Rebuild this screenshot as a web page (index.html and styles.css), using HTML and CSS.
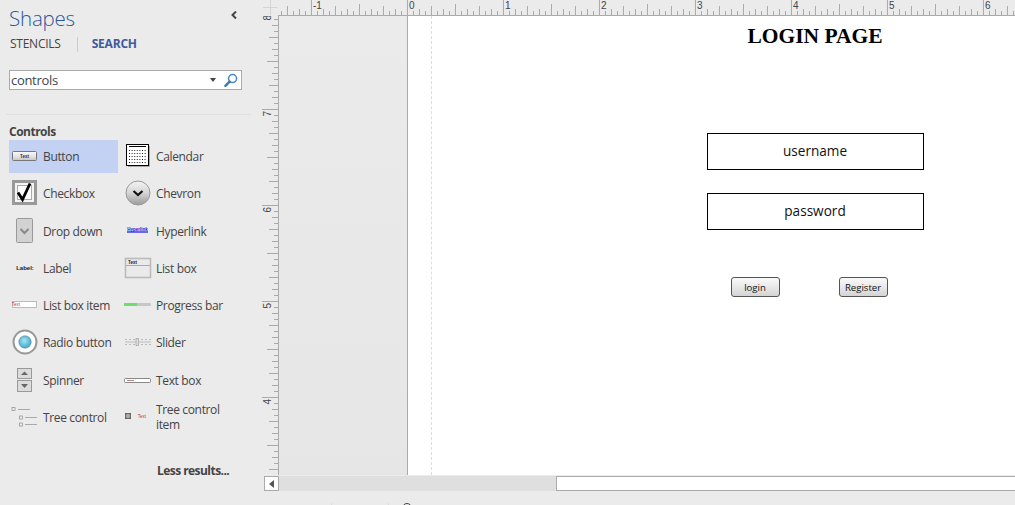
FILE: index.html
```html
<!DOCTYPE html>
<html lang="en">
<head>
<meta charset="utf-8">
<title>Shapes - Login page</title>
<link rel="stylesheet" href="styles.css">
</head>
<body>
<svg class="defs" width="0" height="0" aria-hidden="true">
  <defs>
    <linearGradient id="gBtn" x1="0" y1="0" x2="0" y2="1"><stop offset="0" stop-color="#fafafa"/><stop offset="0.5" stop-color="#e6e6e6"/><stop offset="1" stop-color="#c4c4c4"/></linearGradient>
    <linearGradient id="gChev" x1="0" y1="0" x2="0" y2="1"><stop offset="0" stop-color="#f4f4f4"/><stop offset="0.5" stop-color="#d4d4d4"/><stop offset="1" stop-color="#9a9a9a"/></linearGradient>
    <radialGradient id="gRadio" cx="0.45" cy="0.4" r="0.65"><stop offset="0" stop-color="#a5e4f4"/><stop offset="1" stop-color="#36a3c9"/></radialGradient>
    <pattern id="hTicks" width="96" height="16" patternUnits="userSpaceOnUse" patternTransform="translate(33 0)">
      <path class="tick" d="M.5 0V15M48.5 4V15M24.5 6V15M72.5 6V15M12.5 9V15M36.5 9V15M60.5 9V15M84.5 9V15M6.5 11V15M18.5 11V15M30.5 11V15M42.5 11V15M54.5 11V15M66.5 11V15M78.5 11V15M90.5 11V15"/>
    </pattern>
    <pattern id="vTicks" width="17" height="96" patternUnits="userSpaceOnUse" patternTransform="translate(0 -3)">
      <path class="tick" d="M0 .5H16M5 48.5H16M7 24.5H16M7 72.5H16M10 12.5H16M10 36.5H16M10 60.5H16M10 84.5H16M12 6.5H16M12 18.5H16M12 30.5H16M12 42.5H16M12 54.5H16M12 66.5H16M12 78.5H16M12 90.5H16"/>
    </pattern>
  </defs>
</svg>

<aside class="sidebar">
  <header class="panel-head">
    <h1 class="panel-title">Shapes</h1>
    <svg class="collapse" width="6" height="8" viewBox="0 0 6 8"><path d="M5 .5 1.5 4 5 7.5" fill="none" stroke="#444" stroke-width="2"/></svg>
  </header>
  <nav class="tabs">
    <span class="tab">STENCILS</span>
    <span class="tab-sep"></span>
    <span class="tab tab-active">SEARCH</span>
  </nav>
  <div class="search">
    <span class="search-text">controls</span>
    <svg class="search-arrow" width="6" height="4" viewBox="0 0 6 4"><path d="M0 0H6L3 4Z" fill="#444"/></svg>
    <svg class="search-icon" width="14" height="15" viewBox="0 0 14 15"><circle cx="8.6" cy="5.6" r="4" fill="#fff" stroke="#4a86c0" stroke-width="1.5"/><path d="M5.6 8.6 1.4 12.8" stroke="#3a78b4" stroke-width="2.4" stroke-linecap="round"/></svg>
  </div>
  <hr class="panel-rule">
  <h2 class="group-title">Controls</h2>
  <ul class="shape-grid">
    <li class="shape shape-selected">
      <svg class="shape-icon" viewBox="0 0 34 33"><rect x="3.5" y="11.5" width="24" height="9" rx="1" fill="url(#gBtn)" stroke="#777"/><text x="15.5" y="18" class="mini mini-dark">Text</text></svg>
      <span>Button</span>
    </li>
    <li class="shape">
      <svg class="shape-icon" viewBox="0 0 34 33"><rect x="4.5" y="4.5" width="22" height="22" fill="#f4f4f4" stroke="#999" stroke-width="3"/><rect x="8.5" y="8.5" width="14" height="14" fill="#fff" stroke="#aaa"/><path d="M9 15.5 13.5 22.5 21 6.5" fill="none" stroke="#000" stroke-width="2.8"/></svg>
      <span>Checkbox</span>
    </li>
    <li class="shape">
      <svg class="shape-icon" viewBox="0 0 34 33"><rect x="7.5" y="3.5" width="16" height="24" rx="1" fill="#d2d2d2" stroke="#999"/><path d="M11.5 14 15.5 18 19.5 14" fill="none" stroke="#888" stroke-width="2"/></svg>
      <span>Drop down</span>
    </li>
    <li class="shape">
      <svg class="shape-icon" viewBox="0 0 34 33"><text x="16" y="18" class="mini mini-label">Label:</text></svg>
      <span>Label</span>
    </li>
    <li class="shape">
      <svg class="shape-icon" viewBox="0 0 34 33"><rect x="3.5" y="12.5" width="24" height="6" fill="#fff" stroke="#bbb"/><text x="7" y="17" class="mini mini-red">Text</text></svg>
      <span>List box item</span>
    </li>
    <li class="shape">
      <svg class="shape-icon" viewBox="0 0 34 33"><circle cx="16" cy="16" r="11.5" fill="#fff" stroke="#999" stroke-width="2"/><circle cx="16" cy="16" r="6.2" fill="url(#gRadio)" stroke="#5a8a9c" stroke-width=".6"/></svg>
      <span>Radio button</span>
    </li>
    <li class="shape">
      <svg class="shape-icon" viewBox="0 0 34 33"><rect x="8.5" y="4.5" width="14" height="10" fill="#dcdcdc" stroke="#999"/><path d="M12 11 15.5 7.5 19 11Z" fill="#666"/><rect x="8.5" y="16.5" width="14" height="11" fill="#dcdcdc" stroke="#999"/><path d="M12 20 19 20 15.5 24Z" fill="#666"/></svg>
      <span>Spinner</span>
    </li>
    <li class="shape">
      <svg class="shape-icon" viewBox="0 0 34 33"><path d="M9 8.5H21M16 16.5H28M16 23.5H28" stroke="#aaa" fill="none"/><rect x="3" y="6.5" width="3" height="3" fill="#eee" stroke="#999" stroke-width=".8"/><rect x="10.5" y="15" width="3" height="3" fill="#eee" stroke="#999" stroke-width=".8"/><rect x="10.5" y="22" width="3" height="3" fill="#eee" stroke="#999" stroke-width=".8"/></svg>
      <span>Tree control</span>
    </li>
    <li class="shape">
      <svg class="shape-icon" viewBox="0 0 34 33"><rect x="4.5" y="4.5" width="22" height="21" fill="#fff" stroke="#000"/><path d="M27.5 6V26.5H6" fill="none" stroke="#aaa"/><path d="M7 6.5H24" stroke="#000"/><path d="M7 10.5H24M7 13.5H24M7 16.5H24M7 19.5H24M7 22.5H24" stroke="#222" stroke-dasharray="1 1.6"/></svg>
      <span>Calendar</span>
    </li>
    <li class="shape">
      <svg class="shape-icon" viewBox="0 0 34 33"><circle cx="16" cy="16" r="12" fill="url(#gChev)" stroke="#999"/><path d="M11.5 14 16 18 20.5 14" fill="none" stroke="#111" stroke-width="2.2"/></svg>
      <span>Chevron</span>
    </li>
    <li class="shape">
      <svg class="shape-icon" viewBox="0 0 34 33"><text x="15.5" y="16" class="mini mini-blue">Hyperlink</text><path d="M5 17H26" stroke="#1414d8" stroke-width="1.2"/></svg>
      <span>Hyperlink</span>
    </li>
    <li class="shape">
      <svg class="shape-icon" viewBox="0 0 34 33"><rect x="3.5" y="6.5" width="25" height="19" fill="#eaeaea" stroke="#bbb" stroke-width="1.6"/><path d="M4 13.5H28" stroke="#aaa"/><text x="6" y="12" class="mini mini-start">Text</text></svg>
      <span>List box</span>
    </li>
    <li class="shape">
      <svg class="shape-icon" viewBox="0 0 34 33"><rect x="2" y="14" width="27" height="3" rx="1" fill="#c6c6c6"/><rect x="2" y="14" width="13" height="3" fill="#6fdc6f"/></svg>
      <span>Progress bar</span>
    </li>
    <li class="shape">
      <svg class="shape-icon" viewBox="0 0 34 33"><path d="M3 13.5H29M3 18.5H29" stroke="#bbb" stroke-dasharray="2 2"/><path d="M3 16H29" stroke="#bbb"/><rect x="14" y="12.5" width="2.5" height="7" fill="#ddd" stroke="#aaa" stroke-width=".8"/></svg>
      <span>Slider</span>
    </li>
    <li class="shape">
      <svg class="shape-icon" viewBox="0 0 34 33"><rect x="2.5" y="14.5" width="26" height="4" rx="1" fill="#fff" stroke="#888"/><path d="M5 16.5H12" stroke="#b58a8a"/></svg>
      <span>Text box</span>
    </li>
    <li class="shape shape-wrap">
      <svg class="shape-icon" viewBox="0 0 34 33"><rect x="3.5" y="12.5" width="5" height="5" fill="#888" stroke="#666"/><path d="M6 12.5V17.5M3.5 15H8.5" stroke="#ddd" stroke-width=".6"/><text x="20" y="17" class="mini mini-red">Text</text></svg>
      <span>Tree control item</span>
    </li>
  </ul>
  <a class="less">Less results...</a>
</aside>

<main class="workspace">
  <div class="ruler-row">
    <svg class="ruler-corner" width="16" height="16" viewBox="0 0 16 16"><path d="M1 7.5H15M8.5 0V15" stroke="#d4d4d4"/></svg>
    <svg class="ruler-h" width="737" height="16" viewBox="0 0 737 16">
      <rect width="737" height="16" fill="url(#hTicks)"/>
      <path class="tick" d="M0 15.5H737"/>
      <text class="ruler-num" x="35" y="9.2">-1</text>
      <text class="ruler-num" x="131" y="9.2">0</text>
      <text class="ruler-num" x="227" y="9.2">1</text>
      <text class="ruler-num" x="323" y="9.2">2</text>
      <text class="ruler-num" x="419" y="9.2">3</text>
      <text class="ruler-num" x="515" y="9.2">4</text>
      <text class="ruler-num" x="611" y="9.2">5</text>
      <text class="ruler-num" x="707" y="9.2">6</text>
    </svg>
  </div>
  <div class="canvas-row">
    <svg class="ruler-v" width="17" height="459" viewBox="0 0 17 459">
      <rect width="17" height="459" fill="url(#vTicks)"/>
      <path class="tick" d="M16.5 0V459"/>
      <text class="ruler-num" transform="translate(9.2 4.5) rotate(-90)">8</text>
      <text class="ruler-num" transform="translate(9.2 100.5) rotate(-90)">7</text>
      <text class="ruler-num" transform="translate(9.2 196.5) rotate(-90)">6</text>
      <text class="ruler-num" transform="translate(9.2 292.5) rotate(-90)">5</text>
      <text class="ruler-num" transform="translate(9.2 388.5) rotate(-90)">4</text>
    </svg>
    <div class="pasteboard"></div>
    <div class="page">
      <div class="margin-guide"></div>
      <div class="page-title">LOGIN PAGE</div>
      <div class="field field-user">username</div>
      <div class="field field-pass">password</div>
      <div class="btn btn-login">login</div>
      <div class="btn btn-register">Register</div>
    </div>
  </div>
  <div class="scroll-row">
    <div class="scroll-btn"><svg width="5" height="8" viewBox="0 0 5 8"><path d="M5 0V8L0 4Z" fill="#555"/></svg></div>
    <div class="scroll-track"></div>
    <div class="scroll-thumb"></div>
  </div>
  <div class="status-row">
    <span class="status-sep"></span>
    <span class="status-sep status-sep-2"></span>
    <span class="status-zoom"></span>
  </div>
</main>
</body>
</html>
```

FILE: styles.css
```css
* { box-sizing: border-box; }
html, body { margin: 0; padding: 0; }
body {
  width: 1015px;
  height: 505px;
  overflow: hidden;
  display: flex;
  background: #ebebeb;
  font-family: "Open Sans", "Noto Sans", sans-serif;
  color: #444;
}
.defs { position: absolute; }

/* Shapes panel */
.sidebar { width: 262px; flex: none; padding: 0 0 0 9px; }
.panel-head { display: flex; align-items: center; justify-content: space-between; height: 36px; padding-right: 25px; }
.panel-title { margin: 0; font-size: 20.5px; font-weight: 300; color: #2b579a; line-height: 36px; letter-spacing: -.2px; }
.collapse { margin-top: -6px; }
.tabs { display: flex; align-items: center; height: 16px; font-size: 12px; padding-left: 1px; }
.tab { letter-spacing: -.25px; line-height: 16px; }
.tab-active { font-weight: 700; color: #3d5a9e; letter-spacing: -.2px; }
.tab-sep { width: 1px; height: 15px; background: #ccc; margin: 0 14px 0 16px; }
.search {
  width: 233px; height: 20px; margin-top: 18px;
  background: #fff; border: 1px solid #aaa;
  display: flex; align-items: center; padding: 0 3px 0 1px;
}
.search-text { font-size: 13px; flex: 1; letter-spacing: -.3px; }
.search-arrow { margin-right: 8px; }
.panel-rule { margin: 24px 0 0 -3px; width: 245px; height: 1px; border: 0; background: #e0e0e0; }
.group-title { margin: 9px 0 0; font-size: 12px; font-weight: 700; line-height: 16px; letter-spacing: -.5px; }
.shape-grid {
  list-style: none; margin: 0; padding: 0;
  display: grid;
  grid-template-columns: 109px 109px;
  grid-template-rows: repeat(8, 33px);
  grid-auto-flow: column;
  column-gap: 4px;
  row-gap: 4.3px;
}
.shape { display: flex; align-items: center; font-size: 12px; line-height: 15px; letter-spacing: -.35px; white-space: normal; }
.shape span { flex: 1; }
.shape-wrap span { margin-top: -2px; }
.shape-selected { background: #c3d1f2; }
.shape-icon { width: 34px; height: 33px; flex: none; }
.mini { font-family: "Liberation Sans", sans-serif; font-size: 4.5px; text-anchor: middle; letter-spacing: 0; }
.mini-dark { fill: #333; font-weight: 700; }
.mini-label { fill: #222; font-weight: 700; font-size: 6px; }
.mini-red { fill: #c33; }
.mini-blue { fill: #1414d8; font-size: 4.5px; font-weight: 700; }
.mini-start { fill: #222; text-anchor: start; font-weight: 700; }
.less { display: block; margin: 29px 0 0 148px; font-size: 12px; font-weight: 700; line-height: 16px; letter-spacing: -.55px; }

/* Workspace */
.workspace { flex: 1; min-width: 0; display: flex; flex-direction: column; }
.ruler-row { display: flex; height: 16px; flex: none; }
.ruler-corner, .ruler-h, .ruler-v { flex: none; display: block; }
.tick { stroke: #aaa; stroke-width: 1; fill: none; }
.ruler-num { font-family: "Liberation Sans", sans-serif; font-size: 10px; fill: #444; stroke: none; }
.canvas-row { display: flex; height: 459px; flex: none; }
.pasteboard {
  width: 129px; flex: none;
  background: linear-gradient(#ebebeb, #e6e6e6);
  border-right: 1px solid #aaa;
}
.page { position: relative; flex: 1; background: #fff; }
.margin-guide { position: absolute; left: 23px; top: 0; bottom: 0; border-left: 1px dashed #ddd; }
.page-title {
  position: absolute; left: 307px; width: 200px; top: 7px;
  text-align: center; font: 700 21.5px/26px "Liberation Serif", serif; color: #000;
}
.field {
  position: absolute; left: 299px; width: 217px; height: 37px;
  border: 1px solid #000; background: #fff;
  display: flex; align-items: center; justify-content: center;
  padding: 0 1px 2px 0;
  font-size: 13.6px; color: #111;
}
.field-user { top: 117px; }
.field-pass { top: 177px; }
.btn {
  position: absolute; top: 261px; width: 49px; height: 20px;
  border: 1px solid #555; border-radius: 3px;
  background: linear-gradient(#fafafa, #e8e8e8 50%, #d4d4d4);
  display: flex; align-items: center; justify-content: center;
  padding-right: 1px;
  font-size: 9.6px; color: #111;
}
.btn-login { left: 323px; }
.btn-register { left: 431px; }

/* Scroll bar and status */
.scroll-row { display: flex; height: 15px; flex: none; margin-top: 1px; padding-left: 2px; }
.scroll-btn {
  width: 15px; flex: none; background: #fff; border: 1px solid #aaa;
  display: flex; align-items: center; justify-content: center;
}
.scroll-track { width: 277px; flex: none; background: #dfdfdf; }
.scroll-thumb { flex: 1; background: #fff; border: 1px solid #aaa; border-right: 0; }
.status-row { position: relative; flex: 1; overflow: hidden; }
.status-sep { position: absolute; left: 69px; top: 12px; width: 1px; height: 2px; background: #ddd; }
.status-sep-2 { left: 126px; }
.status-zoom { position: absolute; left: 140px; top: 12px; width: 10px; height: 10px; border: 1px solid #444; border-radius: 50%; }
```
